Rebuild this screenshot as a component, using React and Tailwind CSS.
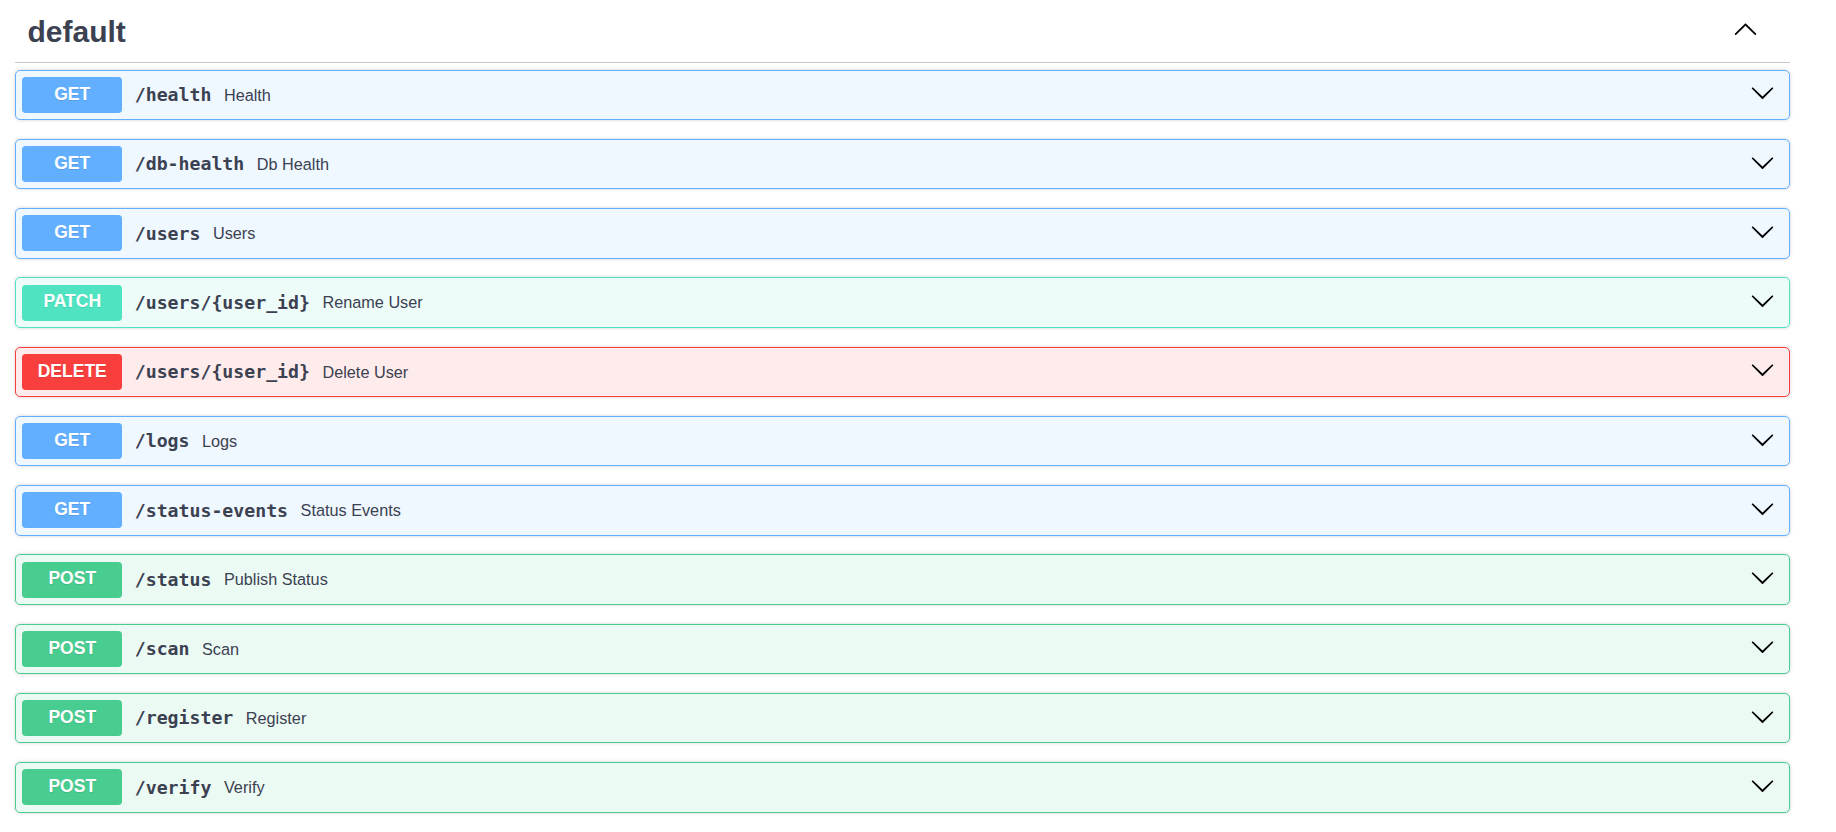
import React from "react";

const styles = {
  GET: {
    box: "border-[#61affe] bg-[rgba(97,175,254,0.1)]",
    badge: "bg-[#61affe]",
  },
  POST: {
    box: "border-[#49cc90] bg-[rgba(73,204,144,0.1)]",
    badge: "bg-[#49cc90]",
  },
  PATCH: {
    box: "border-[#50e3c2] bg-[rgba(80,227,194,0.1)]",
    badge: "bg-[#50e3c2]",
  },
  DELETE: {
    box: "border-[#f93e3e] bg-[rgba(249,62,62,0.1)]",
    badge: "bg-[#f93e3e]",
  },
};

const operations = [
  { method: "GET", path: "/health", summary: "Health" },
  { method: "GET", path: "/db-health", summary: "Db Health" },
  { method: "GET", path: "/users", summary: "Users" },
  { method: "PATCH", path: "/users/{user_id}", summary: "Rename User" },
  { method: "DELETE", path: "/users/{user_id}", summary: "Delete User" },
  { method: "GET", path: "/logs", summary: "Logs" },
  { method: "GET", path: "/status-events", summary: "Status Events" },
  { method: "POST", path: "/status", summary: "Publish Status" },
  { method: "POST", path: "/scan", summary: "Scan" },
  { method: "POST", path: "/register", summary: "Register" },
  { method: "POST", path: "/verify", summary: "Verify" },
];

function ArrowDown() {
  return (
    <svg width="25" height="25" viewBox="0 0 20 20" className="shrink-0 mb-[4px] mr-[8px]" aria-hidden="true">
      <path
        fill="#000"
        d="M17.418 6.109c.272-.268.709-.268.979 0s.271.701 0 .969l-7.908 7.83c-.27.268-.707.268-.979 0l-7.908-7.83c-.27-.268-.27-.701 0-.969.271-.268.709-.268.979 0L10 13.25l7.418-7.141z"
      />
    </svg>
  );
}

function ArrowUp() {
  return (
    <svg width="25" height="25" viewBox="0 0 20 20" className="shrink-0 mt-[1px]" aria-hidden="true">
      <path
        fill="#000"
        d="M17.418 14.908c.272.268.709.268.979 0s.271-.701 0-.969l-7.908-7.83c-.27-.268-.707-.268-.979 0l-7.908 7.83c-.27.268-.27.701 0 .969.271.268.709.268.979 0L10 7.767l7.418 7.141z"
      />
    </svg>
  );
}

function Operation({ method, path, summary }) {
  const s = styles[method];
  return (
    <div
      className={`mb-[18.75px] rounded-[5px] border box-border shadow-[0_0_3.75px_rgba(0,0,0,0.19)] ${s.box}`}
    >
      <div className="flex items-center p-[6.25px]">
        <span
          className={`flex h-[36px] w-[100px] shrink-0 items-center justify-center rounded-[3.75px] pb-[2px] font-['Liberation_Sans',Arial,sans-serif] text-[17.5px] font-bold text-white [text-shadow:0_1px_0_rgba(0,0,0,0.1)] ${s.badge}`}
        >
          {method}
        </span>
        <span className="px-[12.5px] font-['DejaVu_Sans_Mono',monospace] text-[18.2px] font-bold text-[#3b4151]">
          {path}
        </span>
        <span className="flex-1 font-['Liberation_Sans',Arial,sans-serif] text-[16.25px] text-[#3b4151]">
          {summary}
        </span>
        <ArrowDown />
      </div>
    </div>
  );
}

export default function App() {
  return (
    <div className="min-h-[832px] bg-white pl-[15px]">
      <div className="w-[1775px]">
        <div className="mb-[6.5px] flex items-start border-b border-[#c8c9cc] pt-[15px] pb-[13px] pl-[12.5px] pr-[32px]">
          <h3 className="flex-1 font-['Liberation_Sans',Arial,sans-serif] text-[30px] font-bold leading-[34px] text-[#3b4151]">
            default
          </h3>
          <ArrowUp />
        </div>
        {operations.map((op, i) => (
          <Operation key={i} {...op} />
        ))}
      </div>
    </div>
  );
}
